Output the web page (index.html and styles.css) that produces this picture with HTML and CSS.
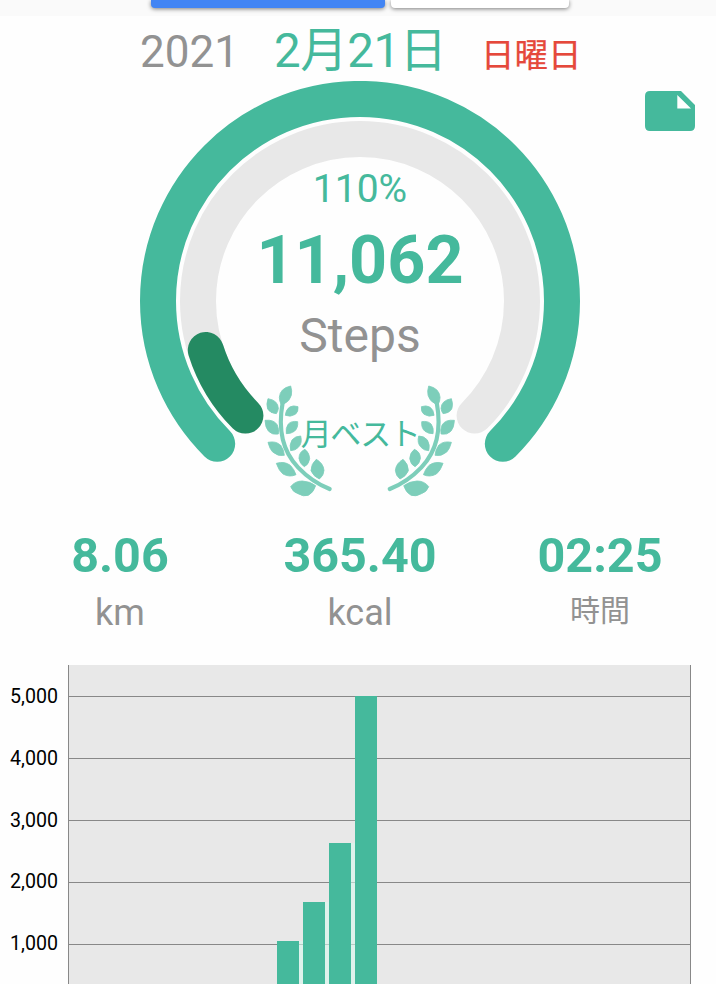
FILE: index.html
```html
<!DOCTYPE html>
<html lang="ja">
<head>
<meta charset="utf-8">
<title>Steps</title>
<link rel="stylesheet" href="styles.css">
</head>
<body>
<header class="tabs">
  <div class="tab tab-active"></div>
  <div class="tab"></div>
</header>
<div class="date">
  <span class="year">2021</span>
  <span class="day">2月21日</span>
  <span class="weekday">日曜日</span>
</div>
<main class="summary">
  <svg class="dial" viewBox="0 1 716 440" width="716" height="440" fill="none" stroke-width="36" stroke-linecap="round">
    <path stroke="#e8e8e8" d="M245.4 335.6A162 162 0 1 1 474.6 335.6"/>
    <path stroke="#45b99c" d="M217.2 363.8A202 202 0 1 1 502.8 363.8"/>
    <path stroke="#248a62" d="M245.4 335.6A162 162 0 0 1 205.8 270"/>
  </svg>
  <svg class="laurel" viewBox="0 0 220 140" width="220" height="140">
    <defs>
      <g id="branch" fill="#7dceba" stroke="#7dceba" stroke-width="2.5" stroke-linejoin="round">
        <path fill="none" stroke-width="12.5" stroke-linecap="round" d="M98 98C83 180 96 242 144 292Q186 336 239 357"/>
        <path d="M122 48Q90 55 88 82Q88 94 94 104Q98 107 103 101Q119 94 124 76Q127 62 122 48Z"/>
        <path d="M54 86Q84 91 85 115Q84 125 79 131Q60 130 53 117Q48 103 54 86Z"/>
        <path d="M45 151Q72 148 82 165Q88 179 85 192Q67 196 55 183Q46 173 45 151Z"/>
        <path d="M54 217Q78 212 92 226Q103 241 103 256Q84 260 68 246Q59 237 54 217Z"/>
        <path d="M79 280Q104 272 122 287Q132 297 138 314Q119 323 99 312Q87 303 79 280Z"/>
        <path d="M122 350Q135 333 157 333Q180 334 197 347Q191 367 175 376Q161 381 144 371Q128 366 122 350Z"/>
        <path d="M144 110Q146 125 136 133Q122 142 106 136Q107 119 119 111Q130 105 144 110Z"/>
        <path d="M143 155Q145 174 133 184Q122 192 109 191Q106 174 115 162Q124 152 143 155Z"/>
        <path d="M152 198Q158 219 145 232Q136 242 122 242Q117 226 126 210Q136 198 152 198Z"/>
        <path d="M165 238Q179 249 179 266Q177 283 163 290Q149 282 147 265Q147 246 165 238Z"/>
        <path d="M199 268Q220 280 222 301Q221 318 208 327Q190 319 183 302Q183 282 199 268Z"/>
      </g>
    </defs>
    <use href="#branch" transform="scale(.33333)"/>
    <use href="#branch" transform="translate(219.4 0) scale(-.33333 .33333)"/>
  </svg>
  <div class="readout">
    <div class="percent">110%</div>
    <div class="count">11,062</div>
    <div class="unit">Steps</div>
    <div class="best">月ベスト</div>
  </div>
  <svg class="note" viewBox="0 0 50 40" width="50" height="40"><path fill="#45b99c" fill-rule="evenodd" d="M5 0H36L50 14V35Q50 40 45 40H5Q0 40 0 35V5Q0 0 5 0ZM32.3 4V17.5H46Z"/></svg>
</main>
<section class="stats">
  <div class="stat"><b>8.06</b><span>km</span></div>
  <div class="stat"><b>365.40</b><span>kcal</span></div>
  <div class="stat"><b>02:25</b><span class="kanji">時間</span></div>
</section>
<section class="chart">
  <div class="axis"><span>5,000</span><span>4,000</span><span>3,000</span><span>2,000</span><span>1,000</span></div>
  <div class="plot">
    <div class="bars">
      <i style="height:43px"></i><i style="height:82px"></i><i style="height:141px"></i><i style="height:288px"></i>
    </div>
  </div>
</section>
</body>
</html>
```
FILE: styles.css
```css
* { box-sizing: border-box; }
html { overflow: hidden; }
body {
  margin: 0;
  width: 716px;
  height: 984px;
  overflow: hidden;
  background: #fefefe;
  color: #929292;
  font-family: Roboto, "Noto Sans CJK JP", sans-serif;
}
.tabs {
  display: flex;
  gap: 6px;
  height: 16px;
  padding-left: 151px;
  background: #fafafa;
  overflow: hidden;
}
.tab {
  width: 178px;
  height: 8px;
  border-radius: 0 0 4px 4px;
  background: #fff;
  box-shadow: 0 1px 4px rgba(0, 0, 0, .5);
}
.tab-active { width: 234px; background: #4285f4; }
.date {
  display: flex;
  align-items: baseline;
  height: 65px;
  padding-left: 140px;
  line-height: 71px;
  white-space: nowrap;
}
.date span { height: 65px; }
.year { width: 134px; font-size: 44px; }
.day { width: 207px; font-size: 47.5px; letter-spacing: -.5px; color: #45b99c; }
.weekday { font-size: 33.5px; color: #e5483b; -webkit-text-stroke: .25px #e5483b; }
.summary {
  display: grid;
  grid-template-columns: 716px;
  height: 440px;
}
.summary > * { grid-area: 1 / 1; }
.dial { display: block; }
.laurel { margin: 289px 0 0 250px; }
.note { margin: 10px 0 0 645px; }
.readout { width: 720px; padding-top: 78px; text-align: center; color: #45b99c; white-space: nowrap; }
.percent { height: 61px; font-size: 39px; line-height: 60px; }
.count { height: 80px; font-size: 66.5px; font-weight: 700; line-height: 80px; }
.unit { height: 72px; font-size: 48px; line-height: 72px; color: #929292; }
.best { height: 60px; margin-top: 33px; font-size: 31px; letter-spacing: -1.5px; line-height: 60px; }
.stats { display: grid; grid-template-columns: repeat(3, 240px); height: 144px; padding-top: 5px; }
.stat { display: flex; flex-direction: column; align-items: center; }
.stat b { font-size: 48.5px; line-height: 60px; height: 60px; color: #45b99c; }
.stat span { font-size: 36px; line-height: 54px; height: 54px; }
.stat .kanji { font-size: 30px; line-height: 50px; }
.chart { display: grid; grid-template-columns: 68px 623px; height: 319px; color: #000; }
.axis { display: grid; grid-auto-rows: 61.8px; text-align: right; padding-right: 10px; font-size: 19.6px; line-height: 64px; }
.plot {
  display: flex;
  align-items: flex-end;
  border-left: 1px solid #888;
  border-right: 1px solid #888;
  background: repeating-linear-gradient(#e8e8e8 0 61px, #888 61px 62px) 0 -30px / 100% 349px;
}
.bars { display: flex; align-items: flex-end; gap: 4px; padding-left: 208px; }
.bars i { width: 22px; background: #45b99c; box-shadow: 4px 0 0 rgba(215, 249, 238, .6); }
.bars i:last-child { box-shadow: none; }
```
